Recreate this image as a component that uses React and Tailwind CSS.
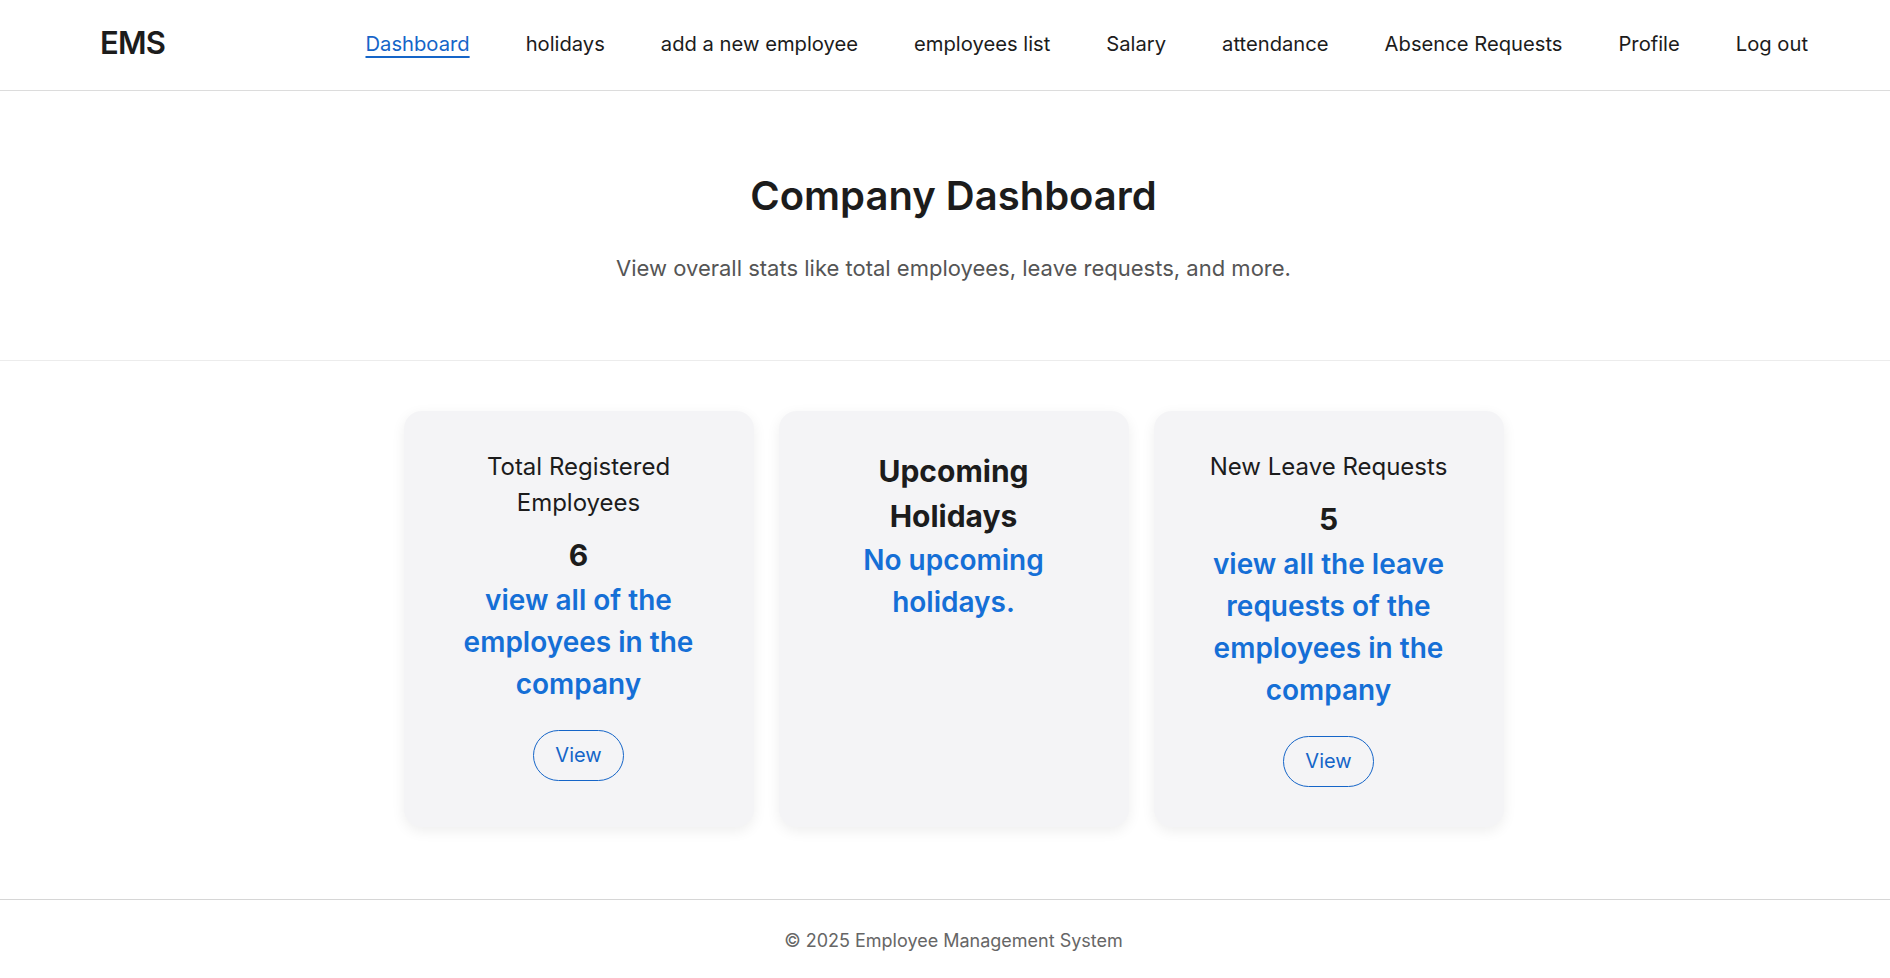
export default function App() {
  const links = [
    "Dashboard",
    "holidays",
    "add a new employee",
    "employees list",
    "Salary",
    "attendance",
    "Absence Requests",
    "Profile",
    "Log out",
  ];
  return (
    <div className="min-h-screen bg-white text-[#1c1c1c]" style={{ fontFamily: "Inter, 'Noto Sans', sans-serif" }}>
      <header className="flex h-[91px] items-center justify-between border-b border-[#dcdcdc] pb-[5px] pl-[100px] pr-[82px]">
        <div className="text-[31px] font-semibold leading-none tracking-tight">EMS</div>
        <nav className="mt-[3px] flex items-center gap-[56px] text-[20.2px] leading-none">
          {links.map((l, i) => (
            <a
              key={l}
              className={
                i === 0
                  ? "text-[#1565c8] underline decoration-2 underline-offset-[5px]"
                  : "text-[#1c1c1c]"
              }
            >
              {l}
            </a>
          ))}
        </nav>
      </header>

      <section className="flex flex-col items-center border-b border-[#ececec] pl-[17px] pt-[81px] pb-[75px]">
        <h1 className="text-[40px] font-semibold leading-[48px]">Company Dashboard</h1>
        <p className="mt-[32px] text-[22px] leading-[33px] text-[#555555]">
          View overall stats like total employees, leave requests, and more.
        </p>
      </section>

      <main className="flex justify-center gap-[25px] pl-[17px] pt-[50px] pb-[72px]">
        <div className="flex h-[416px] w-[350px] flex-col items-center rounded-[18px] bg-[#f4f4f6] px-12 pt-[38px] text-center shadow-[0_4px_14px_rgba(0,0,0,0.07)]">
          <h3 className="text-[24px] leading-[36px]">Total Registered Employees</h3>
          <div className="mt-[12px] text-[30px] font-bold leading-[45px]">6</div>
          <p className="mt-[1px] text-[28px] font-semibold leading-[42px] text-[#156fd6]">
            view all of the employees in the company
          </p>
          <button className="mt-[25px] rounded-full border border-[#1565c8] px-[21px] py-[10px] text-[20px] leading-[29px] text-[#1565c8]">
            View
          </button>
        </div>

        <div className="flex h-[416px] w-[350px] flex-col items-center rounded-[18px] bg-[#f4f4f6] px-12 pt-[38px] text-center shadow-[0_4px_14px_rgba(0,0,0,0.07)]">
          <h2 className="text-[30px] font-bold leading-[45px]">Upcoming Holidays</h2>
          <p className="mt-0 text-[28px] font-semibold leading-[42px] text-[#156fd6]">
            No upcoming holidays.
          </p>
        </div>

        <div className="flex h-[416px] w-[350px] flex-col items-center rounded-[18px] bg-[#f4f4f6] px-12 pt-[38px] text-center shadow-[0_4px_14px_rgba(0,0,0,0.07)]">
          <h3 className="text-[24px] leading-[36px]">New Leave Requests</h3>
          <div className="mt-[12px] text-[30px] font-bold leading-[45px]">5</div>
          <p className="mt-[1px] text-[28px] font-semibold leading-[42px] text-[#156fd6]">
            view all the leave requests of the employees in the company
          </p>
          <button className="mt-[25px] rounded-full border border-[#1565c8] px-[21px] py-[10px] text-[20px] leading-[29px] text-[#1565c8]">
            View
          </button>
        </div>
      </main>

      <footer className="border-t border-[#d6d6d6] pl-[17px] pt-[26px] pb-[22px] text-center text-[18px] leading-[29px] text-[#666666]">
        © 2025 Employee Management System
      </footer>
    </div>
  );
}
